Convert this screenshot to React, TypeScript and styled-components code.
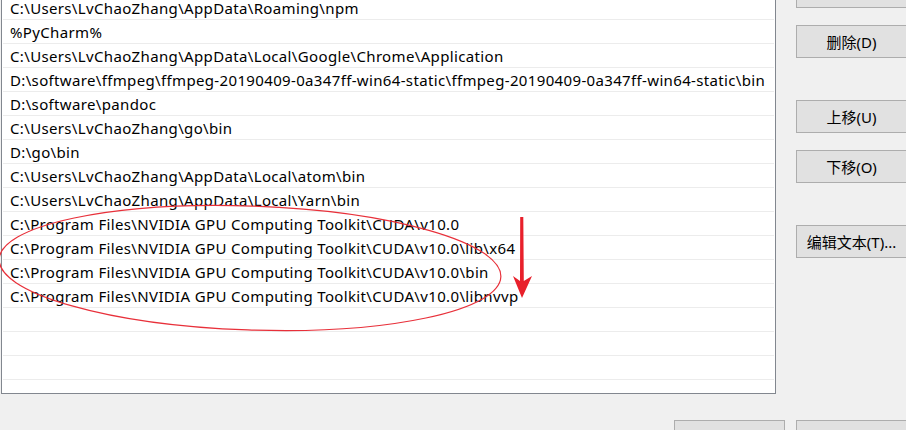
import styled, { createGlobalStyle } from 'styled-components';

const GlobalStyle = createGlobalStyle`
  html, body {
    margin: 0;
    padding: 0;
    background: #f0f0f0;
    overflow: hidden;
  }
`

const Page = styled.div`
  position: relative;
  width: 907px;
  height: 430px;
  overflow: hidden;
  font-family: "Noto Sans", "Noto Sans CJK SC", sans-serif;
  font-size: 15px;
  color: #000;
`

const Main = styled.div`
  display: flex;
  align-items: flex-start;
  gap: 20px;
  padding-left: 1px;
`

const ListBox = styled.div`
  box-sizing: border-box;
  width: 775px;
  height: 423px;
  margin-top: -29px;
  background: #fff;
  border: 1px solid #82878f;
  overflow: hidden;
`

const Row = styled.div`
  box-sizing: border-box;
  height: 24px;
  margin: 0 1px;
  padding: 2px 0 0 7px;
  line-height: 21px;
  letter-spacing: 0.35px;
  border-bottom: 1px solid #ececec;
  white-space: nowrap;
`

const ButtonColumn = styled.div`
  display: flex;
  flex-direction: column;
  width: 111px;
  margin-top: -25px;
`

interface BtnProps {
  $gap?: number;
}

const Button = styled.div<BtnProps>`
  box-sizing: border-box;
  width: 111px;
  height: 33px;
  margin-top: ${p => p.$gap ?? 0}px;
  background: #e1e1e1;
  border: 1px solid #adadad;
  display: flex;
  align-items: center;
  justify-content: center;
  white-space: nowrap;
`

const Footer = styled.div`
  display: flex;
  justify-content: flex-end;
  gap: 11px;
  margin-top: 26px;
`

const Overlay = styled.svg`
  position: absolute;
  left: 0;
  top: 0;
  pointer-events: none;
`

const paths = [
  '',
  'C:\\Users\\LvChaoZhang\\AppData\\Roaming\\npm',
  '%PyCharm%',
  'C:\\Users\\LvChaoZhang\\AppData\\Local\\Google\\Chrome\\Application',
  'D:\\software\\ffmpeg\\ffmpeg-20190409-0a347ff-win64-static\\ffmpeg-20190409-0a347ff-win64-static\\bin',
  'D:\\software\\pandoc',
  'C:\\Users\\LvChaoZhang\\go\\bin',
  'D:\\go\\bin',
  'C:\\Users\\LvChaoZhang\\AppData\\Local\\atom\\bin',
  'C:\\Users\\LvChaoZhang\\AppData\\Local\\Yarn\\bin',
  'C:\\Program Files\\NVIDIA GPU Computing Toolkit\\CUDA\\v10.0',
  'C:\\Program Files\\NVIDIA GPU Computing Toolkit\\CUDA\\v10.0\\lib\\x64',
  'C:\\Program Files\\NVIDIA GPU Computing Toolkit\\CUDA\\v10.0\\bin',
  'C:\\Program Files\\NVIDIA GPU Computing Toolkit\\CUDA\\v10.0\\libnvvp',
  '',
  '',
  '',
]

export default function App() {
  return <Page>
    <GlobalStyle />
    <Main>
      <ListBox>
        {paths.map((p, i) => <Row key={i}>{p}</Row>)}
      </ListBox>
      <ButtonColumn>
        <Button />
        <Button $gap={17}>删除(D)</Button>
        <Button $gap={42}>上移(U)</Button>
        <Button $gap={17}>下移(O)</Button>
        <Button $gap={42}>编辑文本(T)...</Button>
      </ButtonColumn>
    </Main>
    <Footer>
      <Button />
      <Button />
    </Footer>
    <Overlay width="906" height="430" viewBox="0 0 906 430">
      <ellipse cx="250" cy="268" rx="251" ry="62" transform="rotate(2 250 268)"
        fill="none" stroke="#e8303a" strokeWidth="1.2" />
      <path d="M520.2 217 L523.3 217 L523.8 281 L532 276 L522 298 L513 276 L520 281 Z"
        fill="#e8202b" />
    </Overlay>
  </Page>
}
